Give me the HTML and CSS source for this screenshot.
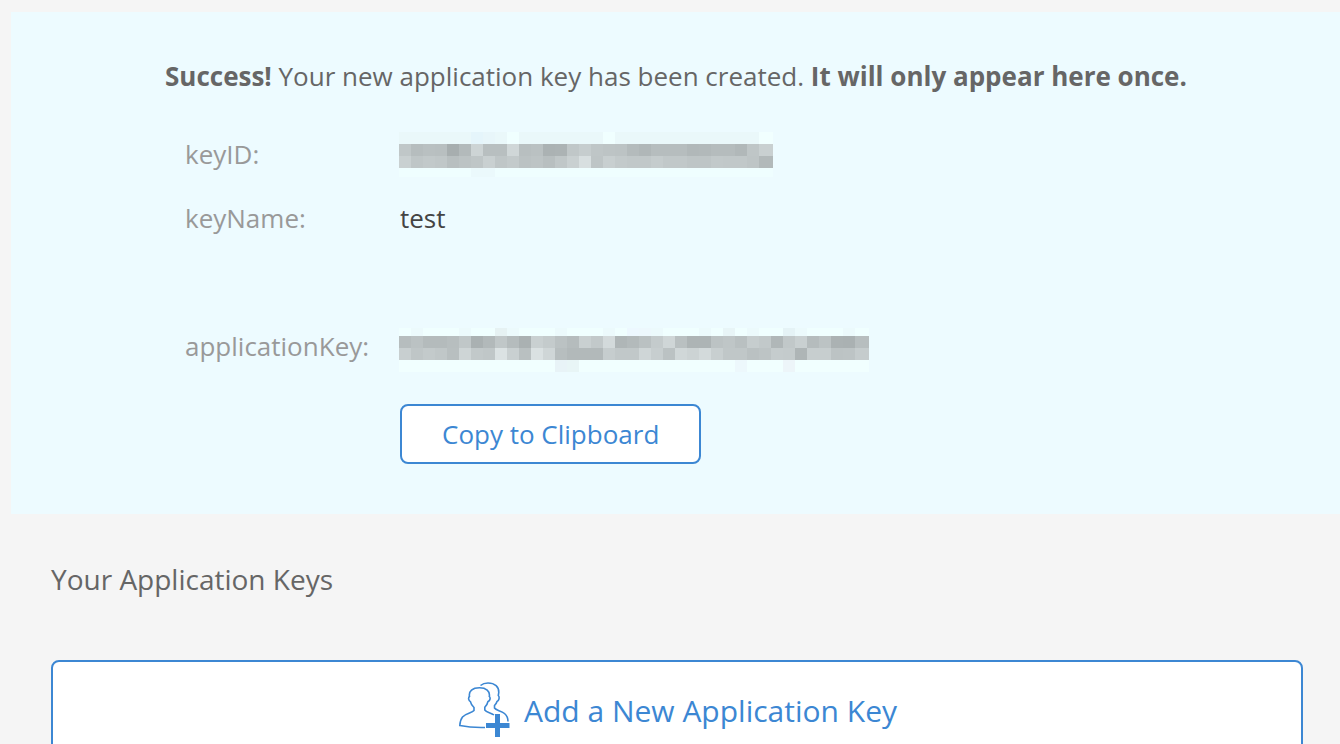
FILE: index.html
```html
<!DOCTYPE html>
<html lang="en">
<head>
<meta charset="utf-8">
<title>Application Keys</title>
<link rel="stylesheet" href="styles.css">
</head>
<body>
<main class="page">
  <section class="notice">
    <p class="notice-message"><strong>Success!</strong> Your new application key has been created. <strong>It will only appear here once.</strong></p>
    <dl class="details">
      <dt>keyID:</dt>
      <dd><svg class="mosaic" data-key="id" width="374" height="48" role="img" aria-label="Hidden key ID"></svg></dd>
      <dt>keyName:</dt>
      <dd>test</dd>
      <dt class="secret">applicationKey:</dt>
      <dd class="secret"><svg class="mosaic" data-key="app" width="482" height="48" role="img" aria-label="Hidden application key"></svg></dd>
    </dl>
    <button class="button copy" type="button">Copy to Clipboard</button>
  </section>
  <section class="keys">
    <h2 class="keys-title">Your Application Keys</h2>
    <button class="button add" type="button">
      <svg class="people" width="52" height="58" viewBox="0 0 52 58" fill="none" stroke="currentColor" stroke-width="1.6" aria-hidden="true">
        <path d="M21.500 3.500C23.500 1.800 26 1 29 1C36 1 40 5 39.800 10.500L39.300 13.500C41 15 40 18.500 38 19.500C37.500 21.500 36.500 22.500 35.500 23.500V26C37 28.500 42 28.500 45.500 31.500C48.500 34 49 36 49 39.500"/>
        <path d="M35 33C32 30.500 27.500 30.500 25.800 28V25.200C27.500 23.500 28.500 22 29 19.500C31.500 18.500 31.500 15.500 30.300 14.500C31.300 9 27 5.800 20.500 5.800C13.500 5.800 9.500 9 10.500 14.500C9 15.500 9.500 19 11.500 19.800C12 22.500 13.500 24 15 25.500V28.500C13 31 7 31 3.500 35C1.500 37.500 1 40.500 .800 43.500C8 45 16 45.800 26 45.500"/>
        <path d="M38.500 32V55M27 43.500H50.500" stroke-width="5"/>
      </svg>
      <span>Add a New Application Key</span>
    </button>
  </section>
</main>
<script src="mosaic.js"></script>
</body>
</html>
```
FILE: styles.css
```css
* { box-sizing: border-box; }
body {
  margin: 0;
  background: #f5f5f5;
  color: #666;
  font-family: "Open Sans", "Noto Sans", sans-serif;
  font-size: 26px;
  line-height: 36px;
}
.page { padding: 12px 0 0 11px; }
.notice {
  background: #edfbff;
  padding: 46px 40px 50px 154px;
}
.notice-message { margin: 0; }
.details {
  display: grid;
  grid-template-columns: 215px 1fr;
  row-gap: 28px;
  margin: 42px 0 40px 20px;
}
.details dt { color: #999; }
.details dd { margin: 0; color: #444; height: 36px; }
.details .secret { margin-top: 64px; }
.mosaic {
  display: block;
  margin: -4px 0 0 -1px;
  shape-rendering: crispEdges;
}
.button {
  font: inherit;
  color: #3c87d3;
  background: #fff;
  border: 2px solid #3c87d3;
  border-radius: 8px;
}
.copy {
  display: block;
  margin-left: 235px;
  padding: 10px 40px;
}
.keys { padding: 45px 37px 0 40px; }
.keys-title {
  margin: 0 0 61px;
  font-size: 28px;
  line-height: 40px;
  font-weight: 400;
}
.add {
  display: flex;
  align-items: center;
  justify-content: center;
  gap: 13px;
  width: 100%;
  padding: 20px 20px 20px 22px;
  font-size: 30px;
  line-height: 40px;
}
```
FILE: mosaic.js
```js
const CELL = 12;
const keys = {
  id: [
    "c0b6b9b8a7b3cdb8b8d0b8baabacc0c6bfbdbcb4b0b6b6b6b1b2b5b5b1bfc9",
    "c9bfc2c0b8bcbfc9bfc3bbbdb8c0c9d8bec8c3c1c1c5c1c1bebec2c1c1beb2"
  ],
  app: [
    "b6bbb4b4b7c0aab2c0b5aac9c4bbb5c9c2d3afb3bac4cfb9adadbcbfb9c6c2b0c1c9b5bcabaab7",
    "c8bfc3c0b8cec2c0dbc9b9dacfb7b2b2b2c6c1c1cfc7bbd0ccd3c8c0c0babdc5c4aec7c7bcbdc5"
  ]
};

function addCell(svg, x, y, width, height, fill) {
  const rect = document.createElementNS("http://www.w3.org/2000/svg", "rect");
  rect.setAttribute("x", x);
  rect.setAttribute("y", y);
  rect.setAttribute("width", width);
  rect.setAttribute("height", height);
  rect.setAttribute("fill", fill);
  svg.append(rect);
}

document.querySelectorAll(".mosaic").forEach((svg) => {
  const isApp = svg.dataset.key === "app";
  const rows = keys[svg.dataset.key];
  const count = rows[0].length / 2;
  const topInset = isApp ? 4 : 0;
  for (let i = 0; i < count; i++) {
    const width = i === count - 1 ? CELL + 2 : CELL;
    const top = isApp
      ? ({ 8: "#e6f2f3", 19: "#edf8ff", 20: "#edf8fd", 27: "#e8f5f7", 32: "#e5f3f6" }[i] || (i % 4 === 1 ? "#ecfafc" : "#f0ffff"))
      : ({ 6: "#e5f5fb", 7: "#e8f6fa", 9: "#f0ffff", 17: "#f0ffff", 30: "#f1ffff" }[i] || "#eaf8fa");
    const bottom = isApp
      ? ({ 13: "#e8f3f7", 14: "#e8f5f6", 28: "#edf8fc", 32: "#edf5f9" }[i] || "#f1ffff")
      : (i === 6 || i === 7 ? "#ebf9fc" : "#effeff");
    addCell(svg, i * CELL, topInset, width, CELL - topInset, top);
    rows.forEach((row, r) => {
      const level = parseInt(row.slice(i * 2, i * 2 + 2), 16);
      addCell(svg, i * CELL, (r + 1) * CELL, width, CELL, `rgb(${level}, ${level + 7}, ${level + 8})`);
    });
    addCell(svg, i * CELL, 3 * CELL, width, isApp ? CELL : 9, bottom);
  }
});
```
